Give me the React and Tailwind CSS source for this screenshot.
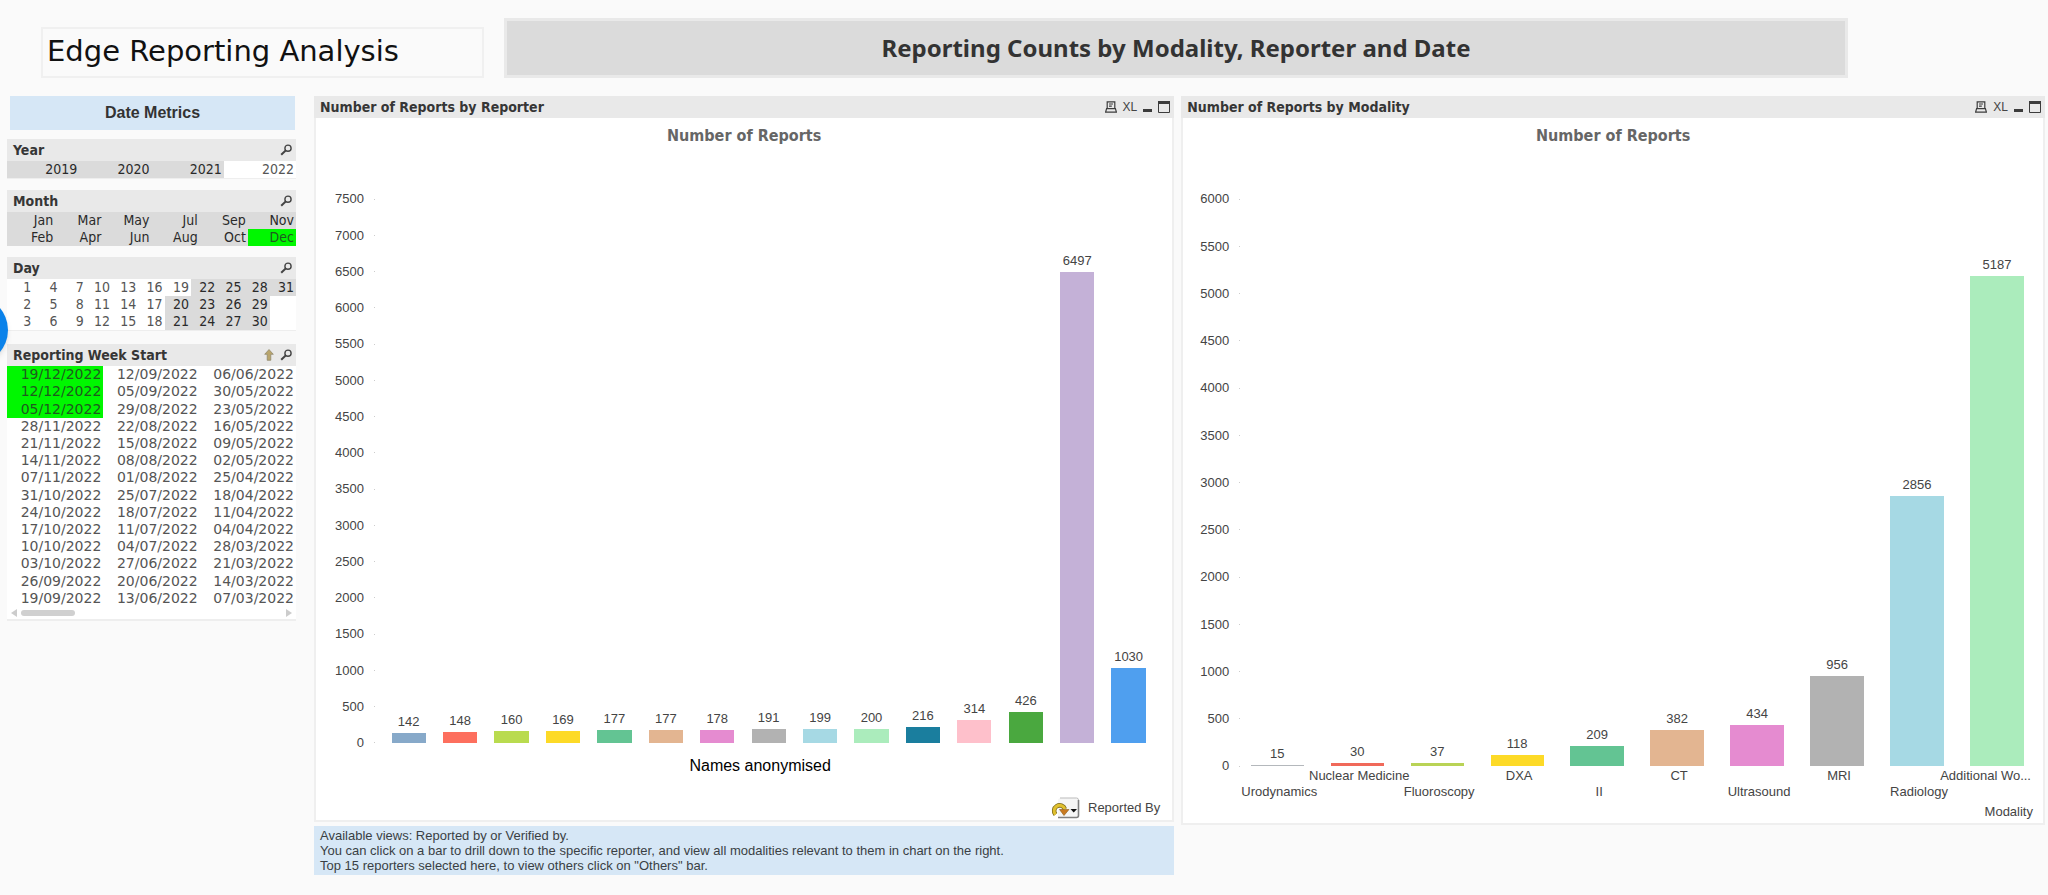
import { Fragment } from 'react';

const years = ['2019', '2020', '2021', '2022'];

const months = [
  'Jan', 'Mar', 'May', 'Jul', 'Sep', 'Nov',
  'Feb', 'Apr', 'Jun', 'Aug', 'Oct', 'Dec',
];

// three rows of eleven, filled column by column
const days = [0, 1, 2].map((row) =>
  Array.from({ length: 11 }, (_, col) => {
    const day = col * 3 + row + 1;
    return day <= 31 ? day : null;
  })
);

const weeks = [
  ['19/12/2022', '12/09/2022', '06/06/2022'],
  ['12/12/2022', '05/09/2022', '30/05/2022'],
  ['05/12/2022', '29/08/2022', '23/05/2022'],
  ['28/11/2022', '22/08/2022', '16/05/2022'],
  ['21/11/2022', '15/08/2022', '09/05/2022'],
  ['14/11/2022', '08/08/2022', '02/05/2022'],
  ['07/11/2022', '01/08/2022', '25/04/2022'],
  ['31/10/2022', '25/07/2022', '18/04/2022'],
  ['24/10/2022', '18/07/2022', '11/04/2022'],
  ['17/10/2022', '11/07/2022', '04/04/2022'],
  ['10/10/2022', '04/07/2022', '28/03/2022'],
  ['03/10/2022', '27/06/2022', '21/03/2022'],
  ['26/09/2022', '20/06/2022', '14/03/2022'],
  ['19/09/2022', '13/06/2022', '07/03/2022'],
];

const reporters = [
  { value: 142, color: '#87a9c9' },
  { value: 148, color: '#fd6f5e' },
  { value: 160, color: '#b9db4f' },
  { value: 169, color: '#fdda27' },
  { value: 177, color: '#63c493' },
  { value: 177, color: '#e3b591' },
  { value: 178, color: '#e58bd0' },
  { value: 191, color: '#b2b2b2' },
  { value: 199, color: '#a6d9e4' },
  { value: 200, color: '#abecbc' },
  { value: 216, color: '#1a7e9e' },
  { value: 314, color: '#fec0cb' },
  { value: 426, color: '#4aa83f' },
  { value: 6497, color: '#c4b1d7' },
  { value: 1030, color: '#4f9fef' },
];

const modalities = [
  { name: 'Urodynamics', value: 15, color: '#b4b8bc' },
  { name: 'Nuclear Medicine', value: 30, color: '#f0695a' },
  { name: 'Fluoroscopy', value: 37, color: '#b9d356' },
  { name: 'DXA', value: 118, color: '#fdda27' },
  { name: 'II', value: 209, color: '#63c493' },
  { name: 'CT', value: 382, color: '#e3b591' },
  { name: 'Ultrasound', value: 434, color: '#e58bd0' },
  { name: 'MRI', value: 956, color: '#b2b2b2' },
  { name: 'Radiology', value: 2856, color: '#a6d9e4' },
  { name: 'Additional Wo...', value: 5187, color: '#abecbc' },
];

function SearchIcon() {
  return (
    <svg width="12" height="12" viewBox="0 0 12 12" fill="none" stroke="#444">
      <circle cx="8" cy="4.2" r="3.1" strokeWidth="1.4" />
      <path d="M5.7 6.6 1.2 10.8" strokeWidth="2" />
    </svg>
  );
}

function ClearIcon() {
  return (
    <svg width="10" height="12" viewBox="0 0 10 12">
      <path d="M5 .5 9.3 5.3H6.8V11.3H3.2V5.3H.7z" fill="#b9a56c" stroke="#8d8468" strokeWidth=".7" />
    </svg>
  );
}

function PrintIcon() {
  return (
    <svg width="12" height="12" viewBox="0 0 12 12" fill="none" stroke="#3c3c3c">
      <path d="M2.2 7.500V.8h7.600v6.700M4 3h4M4 5.200h2.800M1.600 7.700h8.800l1 3.500H.6z" strokeWidth="1.200" />
    </svg>
  );
}

function MinimizeIcon() {
  return (
    <svg width="9" height="12" viewBox="0 0 9 12">
      <path d="M0 8h9v3H0z" fill="#3c3c3c" />
    </svg>
  );
}

function MaximizeIcon() {
  return (
    <svg width="12" height="12" viewBox="0 0 12 12">
      <path d="M.5.5h11v11H.5z" fill="none" stroke="#3c3c3c" />
      <path d="M0 0h12v3H0z" fill="#3c3c3c" />
    </svg>
  );
}

function CycleIcon() {
  return (
    <svg width="30" height="22" viewBox="0 0 30 22">
      <rect x="8" y="1" width="20.500" height="20" rx="2.500" fill="#f6f6f6" />
      <path d="M10 1h16.500a2 2 0 0 1 2 2" fill="none" stroke="#bbb" />
      <path d="M28.500 3v15.500a2 2 0 0 1-2 2H8" fill="none" stroke="#808080" strokeWidth="1.600" />
      <path d="M5.500 17.500A5.500 5.500 0 1 1 14.800 12" fill="none" stroke="#7d6a1c" strokeWidth="4.600" />
      <path d="M5.500 17.500A5.500 5.500 0 1 1 14.800 12" fill="none" stroke="#e0c02e" strokeWidth="3" />
      <path d="M9.500 12.500h9.500L14 18.500z" fill="#c97a20" stroke="#8a5a18" strokeWidth=".6" />
      <path d="M20.500 12h6.500L23.700 15.500z" fill="#111" />
    </svg>
  );
}

function PanelHeader({ title, children }) {
  return (
    <div className="flex h-[22px] items-center justify-between bg-[#e9e9e9] pr-1 pl-1.5">
      <h2 className="text-[14px] leading-5 font-bold text-[#363636]">{title}</h2>
      <div className="flex items-center gap-1.5">{children}</div>
    </div>
  );
}

function SearchButton({ label }) {
  return (
    <button type="button" aria-label={`Search ${label}`}>
      <SearchIcon />
    </button>
  );
}

function Cell({ state, children }) {
  const look = {
    excluded: 'bg-[#dbdbdb] text-[#2a2a2a]',
    possible: 'bg-white text-[#555]',
    selected: 'bg-[#00f700] text-[#1f5a1f]',
  };
  return (
    <button
      type="button"
      className={`block w-full pr-0.5 text-right text-[14px] leading-[17px] ${look[state]}`}
    >
      {children}
    </button>
  );
}

function Chart({ title, max, data, plotHeight, plotPadding, plotOffset, children }) {
  const ticks = [];
  for (let t = max; t >= 0; t -= 500) ticks.push(t);

  return (
    <section className="border-2 border-t-0 border-[#efefef] bg-white">
      <div className="-mx-0.5">
        <PanelHeader title={title}>
          <button type="button" aria-label="Print"><PrintIcon /></button>
          <button type="button" className="font-[Liberation_Sans,sans-serif] text-[12px] leading-4 text-[#444]">XL</button>
          <button type="button" aria-label="Minimize"><MinimizeIcon /></button>
          <button type="button" aria-label="Maximize"><MaximizeIcon /></button>
        </PanelHeader>
      </div>
      <h3 className="mt-1.5 text-center text-base leading-6 font-bold text-[#666]">
        Number of Reports
      </h3>
      <div className={`mt-[51px] flex font-[Liberation_Sans,sans-serif] text-[13px] text-[#444] ${plotPadding}`}>
        <div className={`flex w-[47px] flex-col justify-between ${plotHeight}`}>
          {ticks.map((t) => (
            <div key={t} className="flex h-0 items-center justify-end gap-2.5">
              {t}
              <span className="size-px bg-[#ccc]" />
            </div>
          ))}
        </div>
        <div className={`flex flex-1 items-end ${plotHeight} ${plotOffset}`}>
          {data.map((d, i) => (
            <div key={i} className="flex h-full min-w-0 flex-1 flex-col items-center justify-end">
              <span className="pb-px leading-5">{d.value}</span>
              <div
                className="w-2/3 shrink-0"
                style={{ height: `${(d.value / max) * 100}%`, backgroundColor: d.color }}
              />
            </div>
          ))}
        </div>
      </div>
      {children}
    </section>
  );
}

export default function App() {
  return (
    <div className="relative min-h-screen overflow-hidden bg-[#fafafa] pt-[18px] pr-[3px] pb-5 font-[DejaVu_Sans_Condensed,DejaVu_Sans,sans-serif]">
      <header className="flex items-end pl-[41px]">
        <h1 className="h-[51px] w-[443px] border-2 border-[#f0f0f0] pl-1 font-[DejaVu_Sans,sans-serif] text-[29px] leading-[44px] text-[#111]">
          Edge Reporting Analysis
        </h1>
        <div className="mr-[197px] ml-5 flex h-[60px] flex-1 items-center justify-center border-3 border-[#e9e9e9] bg-[#dbdbdb]">
          <h2 className="font-[Noto_Sans,sans-serif] text-2xl leading-8 font-bold text-[#333]">
            Reporting Counts by Modality, Reporter and Date
          </h2>
        </div>
      </header>

      <main className="mt-[18px] flex items-start">
        <aside className="w-[296px] shrink-0 pl-[7px]">
          <div className="mr-px ml-[3px] bg-[#d6e7f6] text-center font-[Liberation_Sans,sans-serif] text-base leading-[34px] font-bold text-[#333]">
            Date Metrics
          </div>

          <section className="mt-[9px] border-b border-[#eee]">
            <PanelHeader title="Year"><SearchButton label="Year" /></PanelHeader>
            <div className="grid grid-cols-4">
              {years.map((y) => (
                <Cell key={y} state={y === '2022' ? 'possible' : 'excluded'}>{y}</Cell>
              ))}
            </div>
          </section>

          <section className="mt-[11px]">
            <PanelHeader title="Month"><SearchButton label="Month" /></PanelHeader>
            <div className="grid grid-cols-6">
              {months.map((m) => (
                <Cell key={m} state={m === 'Dec' ? 'selected' : 'excluded'}>{m}</Cell>
              ))}
            </div>
          </section>

          <section className="mt-[11px] border-b border-[#eee] bg-white">
            <PanelHeader title="Day"><SearchButton label="Day" /></PanelHeader>
            <div className="grid grid-cols-11">
              {days.map((row, r) => (
                <Fragment key={r}>
                  {row.map((d, c) =>
                    d ? (
                      <Cell key={c} state={d > 19 ? 'excluded' : 'possible'}>{d}</Cell>
                    ) : (
                      <span key={c} />
                    )
                  )}
                </Fragment>
              ))}
            </div>
          </section>

          <section className="mt-[13px] border-b-2 border-[#eee] bg-white">
            <PanelHeader title="Reporting Week Start">
              <button type="button" aria-label="Clear selection"><ClearIcon /></button>
              <SearchButton label="Reporting Week Start" />
            </PanelHeader>
            <div className="grid h-[241px] auto-rows-fr grid-cols-3 font-[DejaVu_Sans,sans-serif]">
              {weeks.map((row, r) =>
                row.map((w, c) => (
                  <Cell key={w} state={r < 3 && c === 0 ? 'selected' : 'possible'}>{w}</Cell>
                ))
              )}
            </div>
            <div className="flex h-3 items-center px-1">
              <svg width="6" height="8" viewBox="0 0 6 8"><path d="M6 0v8L0 4z" fill="#ccc" /></svg>
              <div className="ml-1 h-1.5 w-[54px] rounded-full bg-[#d0d0d0]" />
              <svg className="ml-auto" width="6" height="8" viewBox="0 0 6 8"><path d="M0 0v8l6-4z" fill="#ccc" /></svg>
            </div>
          </section>
        </aside>

        <div className="ml-[18px] grid min-w-0 flex-1 grid-cols-[499fr_501fr] items-start gap-[7px]">
          <div>
            <Chart
              title="Number of Reports by Reporter"
              max={7500}
              data={reporters}
              plotHeight="h-[544px]"
              plotPadding="pl-3 pr-[18px]"
              plotOffset="ml-2"
            >
              <p className="mt-[11px] pl-8 text-center font-[Liberation_Sans,sans-serif] text-base leading-6 text-black">
                Names anonymised
              </p>
              <div className="mt-[19px] mb-px flex items-center justify-end gap-2 pr-3 font-[Liberation_Sans,sans-serif] text-[13px] leading-[22px] text-[#444]">
                <button type="button" aria-label="Change grouping"><CycleIcon /></button>
                Reported By
              </div>
            </Chart>
            <p className="mt-1 bg-[#d6e7f6] py-0.5 pl-1.5 font-[Liberation_Sans,sans-serif] text-[13px] leading-[15px] text-[#3a3f44]">
              Available views: Reported by or Verified by.
              <br />
              You can click on a bar to drill down to the specific reporter, and view all modalities relevant to them in chart on the right.
              <br />
              Top 15 reporters selected here, to view others click on "Others" bar.
            </p>
          </div>

          <Chart
            title="Number of Reports by Modality"
            max={6000}
            data={modalities}
            plotHeight="h-[567px]"
            plotPadding="pl-2.5 pr-1.5"
            plotOffset="-ml-[3px]"
          >
            <div className="mt-0.5 grid grid-cols-10 pr-1 pl-14 font-[Liberation_Sans,sans-serif] text-[13px] leading-4 text-[#444]">
              {modalities.map((m, i) => (
                <div
                  key={m.name}
                  className={`flex min-w-0 whitespace-nowrap ${i % 2 === 0 ? 'pt-4' : ''} ${i === modalities.length - 1 ? 'justify-end pr-2' : 'justify-center'}`}
                >
                  {m.name}
                </div>
              ))}
            </div>
            <p className="pt-px pr-2.5 text-right font-[Liberation_Sans,sans-serif] text-[13px] leading-[22px] text-[#444]">
              Modality
            </p>
          </Chart>
        </div>
      </main>

      {/* floating widget, mostly off the left edge */}
      <div className="absolute top-[296px] -left-[60px] size-[68px] rounded-full bg-[#0a82ea] shadow-md" />
    </div>
  );
}
